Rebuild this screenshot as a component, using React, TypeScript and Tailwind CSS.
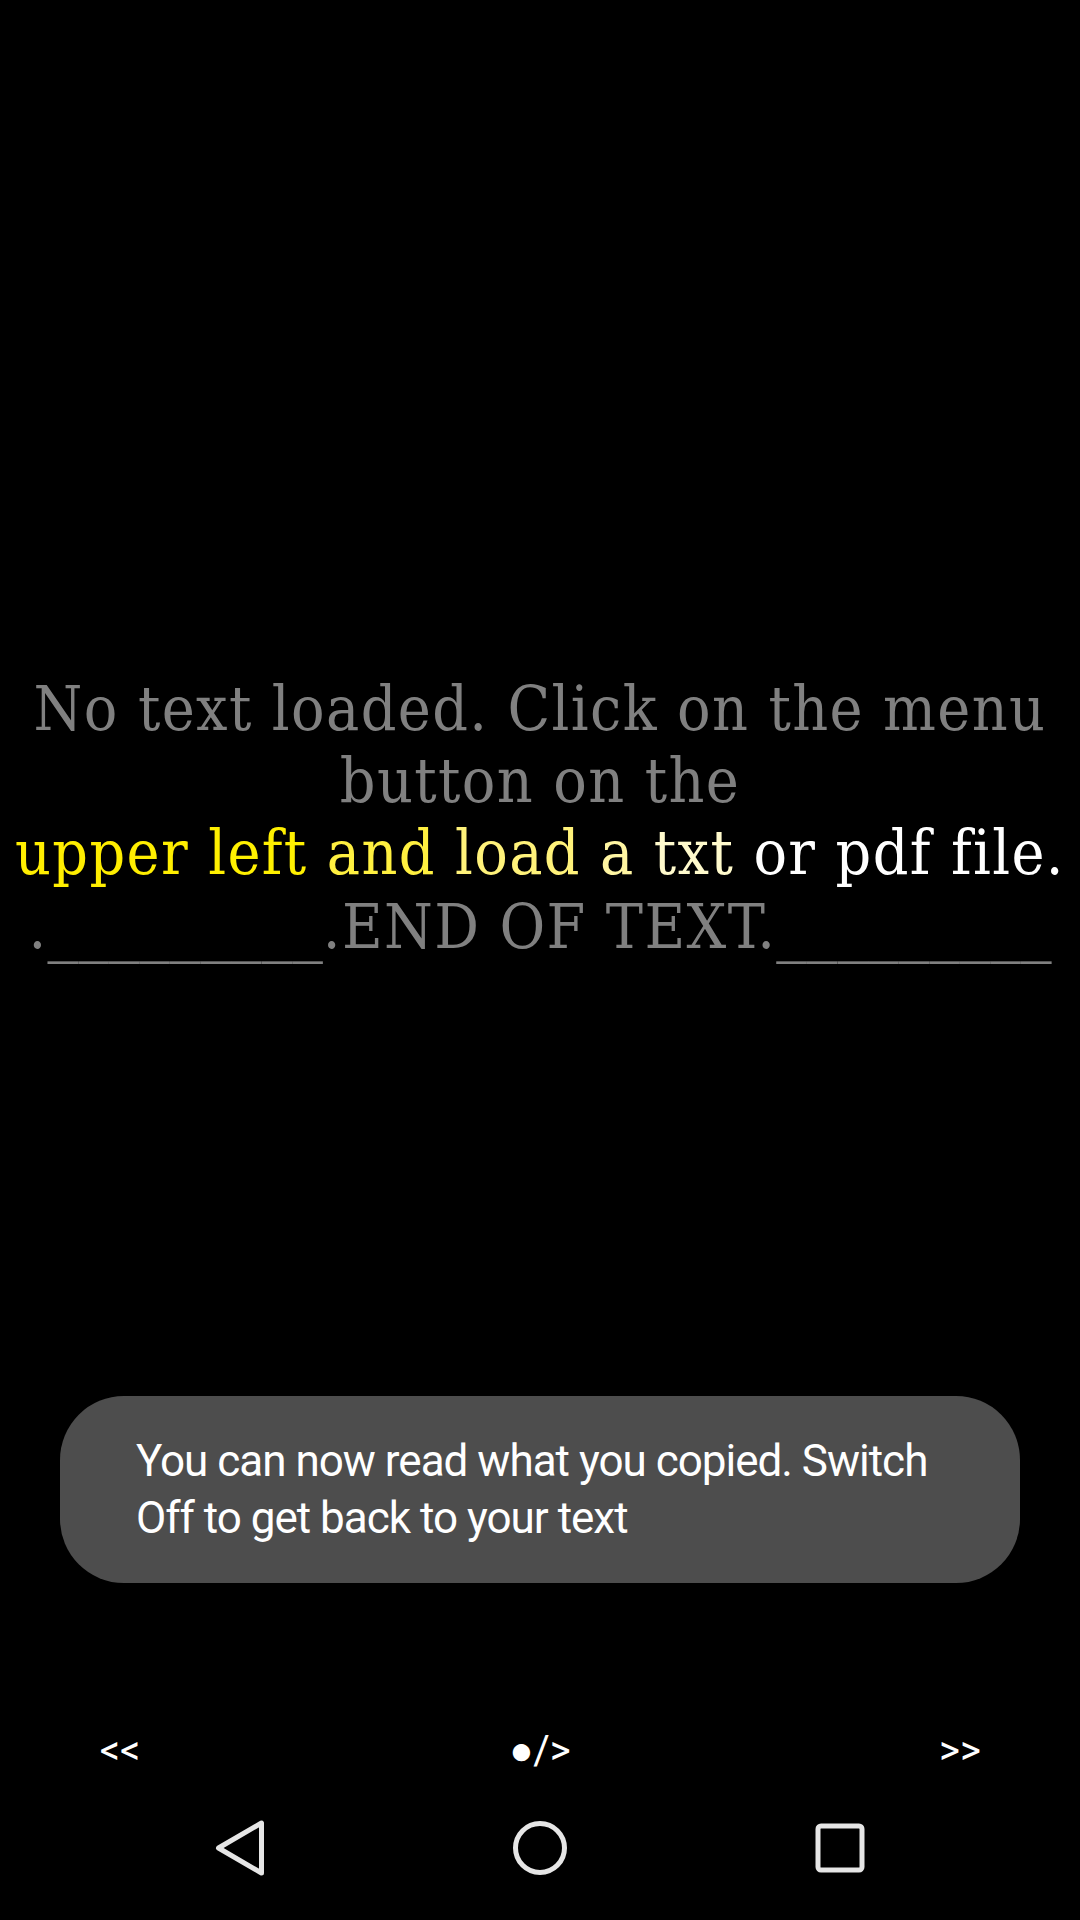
const serif = "font-['DejaVu_Serif_Condensed','DejaVu_Serif',serif]";

const line3 = [
  { w: "upper", c: "text-[#ffee00]" },
  { w: "left", c: "text-[#fff000]" },
  { w: "and", c: "text-[#fff040]" },
  { w: "load", c: "text-[#fff27a]" },
  { w: "a", c: "text-[#fff5a2]" },
  { w: "txt", c: "text-[#fffacc]" },
  { w: "or", c: "text-white" },
  { w: "pdf", c: "text-white" },
  { w: "file.", c: "text-white" },
];

export default function App() {
  return (
    <div className="w-[1080px] h-[1920px] bg-black flex flex-col overflow-hidden">
      {/* reader text */}
      <div className={`pt-[673px] text-center text-[62px] leading-[72px] tracking-[1.4px] ${serif}`}>
        <p className="text-[#808080] whitespace-nowrap">No text loaded. Click on the menu</p>
        <p className="text-[#808080] whitespace-nowrap">button on the</p>
        <p className="whitespace-nowrap">
          {line3.map((x, i) => (
            <span key={i} className={x.c}>
              {x.w}
              {i < line3.length - 1 ? " " : ""}
            </span>
          ))}
        </p>
        <p className="text-[#808080] whitespace-nowrap h-[72px]">
          .<span className="text-[68px] tracking-[0px]">_________</span>.END OF TEXT.
          <span className="text-[68px] tracking-[0px]">_________</span>
        </p>
      </div>

      {/* toast */}
      <div className="mt-[435px] mx-[60px] h-[187px] rounded-[64px] bg-[#4d4d4d] flex items-center pl-[76px] pr-[40px]">
        <p className="text-white text-[44px] leading-[57px] tracking-[-1px] whitespace-nowrap font-['Roboto',sans-serif]">
          You can now read what you copied. Switch
          <br />
          Off to get back to your text
        </p>
      </div>

      <div className="flex-1" />

      {/* page controls */}
      <div className="h-[55px] flex items-start justify-between px-[70px] text-white text-[40px] leading-[60px] font-['Roboto',sans-serif] -mt-[30px]">
        <span className="w-[100px] text-center">&lt;&lt;</span>
        <span className="w-[100px] text-center">●/&gt;</span>
        <span className="w-[100px] text-center">&gt;&gt;</span>
      </div>

      {/* android nav bar */}
      <div className="h-[144px] flex items-center justify-center gap-[240px] text-[#e6e6e6]">
        <svg width="60" height="60" viewBox="0 0 60 60" fill="none" stroke="currentColor" strokeWidth="5" strokeLinejoin="round">
          <path d="M51.5 5 L51.5 55 L8.5 30 Z" />
        </svg>
        <svg width="60" height="60" viewBox="0 0 60 60" fill="none" stroke="currentColor" strokeWidth="5">
          <circle cx="30" cy="30" r="24.5" />
        </svg>
        <svg width="60" height="60" viewBox="0 0 60 60" fill="none" stroke="currentColor" strokeWidth="5">
          <rect x="8" y="8" width="44" height="44" rx="3" />
        </svg>
      </div>
    </div>
  );
}
